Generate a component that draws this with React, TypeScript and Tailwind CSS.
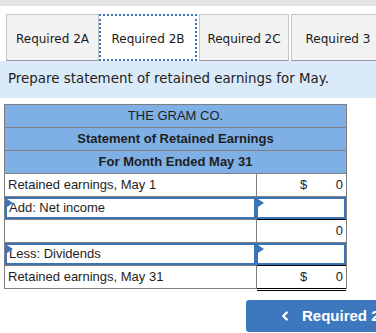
import { ChevronLeft } from "lucide-react"

const tabs = ["Required 2A", "Required 2B", "Required 2C", "Required 3"]

function Marker() {
  return (
    <span className="absolute left-0 top-0 h-0 w-0 border-y-[4px] border-l-[6px] border-y-transparent border-l-[#3b73b9]" />
  )
}

function Row({
  label,
  dollar,
  value,
  input,
  topRule,
  doubleRule,
}: {
  label: string
  dollar?: boolean
  value?: string
  input?: boolean
  topRule?: boolean
  doubleRule?: boolean
}) {
  return (
    <div className="flex h-[23px] border-t border-[#7f7f7f]">
      <div
        className={
          input
            ? "relative flex w-[251px] items-center border-2 border-[#3b73b9] pl-[2px]"
            : "flex w-[251px] items-center pl-[3px]"
        }
      >
        {input && <Marker />}
        {label}
      </div>
      <div
        className={
          input
            ? "relative flex flex-1 items-center border-2 border-[#3b73b9]"
            : "relative flex flex-1 items-center justify-between border-l border-[#7f7f7f] pr-[3px] pl-[43px]"
        }
      >
        {input && <Marker />}
        {topRule && <span className="absolute left-0 right-0 top-[-1px] h-px bg-black" />}
        {doubleRule && (
          <span className="absolute bottom-[-3px] left-0 right-0 h-[3px] border-y border-black" />
        )}
        {!input && <span>{dollar ? "$" : ""}</span>}
        {!input && <span>{value}</span>}
      </div>
    </div>
  )
}

export default function App() {
  return (
    <div className="h-[333px] w-[376px] overflow-hidden bg-white">
      <div className="h-[6px] bg-[#e3e3e3]" />
      <div className="mt-[8px] flex pl-[6px] font-['Verdana','DejaVu_Sans',sans-serif] text-[12px] text-[#1a1a1a]">
        {tabs.map((t, i) =>
          i === 1 ? (
            <div
              key={t}
              className="flex h-[47px] w-[98px] shrink-0 items-center justify-center border-2 border-dotted border-[#3b73b9] bg-white pt-[2px]"
            >
              {t}
            </div>
          ) : (
            <div
              key={t}
              className={
                "flex h-[47px] shrink-0 items-center justify-center border border-[#c6c6c6] border-b-[#9a9a9a] bg-[#f2f2f2] pt-[2px] " +
                (i === 0 ? "w-[93px]" : i === 2 ? "ml-[2px] w-[90px]" : "ml-[2px] w-[94px]")
              }
            >
              {t}
            </div>
          )
        )}
      </div>
      <div className="flex h-[37px] items-center bg-[#dbeaf8] pl-[8px] font-['Verdana','DejaVu_Sans',sans-serif] text-[13.4px] text-[#222]">
        Prepare statement of retained earnings for May.
      </div>
      <div className="ml-[4px] mt-[6px] w-[343px] border-x border-b border-[#7f7f7f] font-['Liberation_Sans',Arial,sans-serif] text-[13px] text-[#1e1e1e]">
        <div className="flex h-[23px] items-center justify-center border-t border-[#7f7f7f] bg-[#7eb0e5]">
          THE GRAM CO.
        </div>
        <div className="flex h-[23px] items-center justify-center border-t border-[#7f7f7f] bg-[#7eb0e5] font-bold">
          Statement of Retained Earnings
        </div>
        <div className="flex h-[23px] items-center justify-center border-t border-[#7f7f7f] bg-[#7eb0e5] font-bold">
          For Month Ended May 31
        </div>
        <Row label="Retained earnings, May 1" dollar value="0" />
        <Row label="Add: Net income" input />
        <Row label="" value="0" topRule />
        <Row label="Less: Dividends" input />
        <Row label="Retained earnings, May 31" dollar value="0" topRule doubleRule />
      </div>
      <div className="mt-[11px] flex pl-[246px]">
        <button
          type="button"
          className="flex h-[32px] w-[150px] shrink-0 items-center gap-[10px] rounded-l-[3px] bg-[#3d78be] pl-[32px] font-['Liberation_Sans',Arial,sans-serif] text-[15px] font-bold whitespace-nowrap text-white"
        >
          <ChevronLeft className="size-[14px] shrink-0" strokeWidth={4} />
          <span className="shrink-0">Required 2A</span>
        </button>
      </div>
    </div>
  )
}
